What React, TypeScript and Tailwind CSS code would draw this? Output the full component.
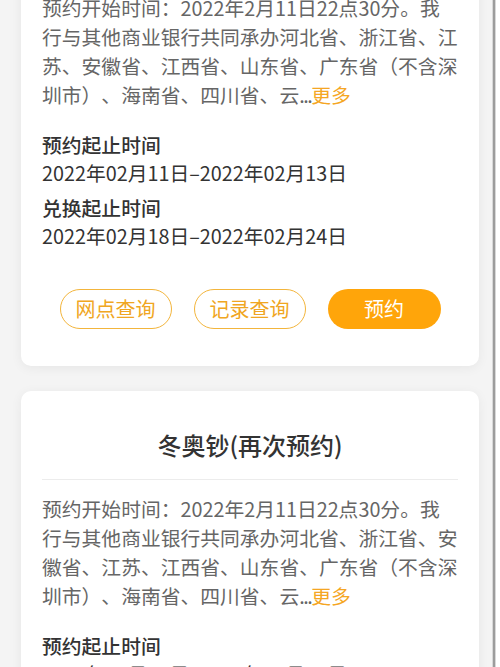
const FONT = { fontFamily: '"Noto Sans CJK SC", "Noto Sans", sans-serif' };

type Card = {
  title: string;
  intro: string;
  reserve: string;
  exchange: string;
};

const cards: Card[] = [
  {
    title: "冬奥钞",
    intro:
      "预约开始时间：2022年2月11日22点30分。我行与其他商业银行共同承办河北省、浙江省、江苏、安徽省、江西省、山东省、广东省（不含深圳市）、海南省、四川省、云",
    reserve: "2022年02月11日–2022年02月13日",
    exchange: "2022年02月18日–2022年02月24日",
  },
  {
    title: "冬奥钞(再次预约)",
    intro:
      "预约开始时间：2022年2月11日22点30分。我行与其他商业银行共同承办河北省、浙江省、安徽省、江苏、江西省、山东省、广东省（不含深圳市）、海南省、四川省、云",
    reserve: "2022年02月11日–2022年02月13日",
    exchange: "2022年02月18日–2022年02月24日",
  },
];

function ReserveCard({ card }: { card: Card }) {
  return (
    <div className="w-[458px] shrink-0 rounded-[10px] bg-white px-[21px] pt-[39px] pb-[37px] shadow-[0_2px_12px_rgba(0,0,0,0.06)]">
      <h3 className="text-center text-[24px] leading-[30px] font-medium text-[#333]">{card.title}</h3>
      <div className="mt-[19px] h-px bg-[#ececec]" />
      <p className="mt-[14px] text-[19.8px] leading-[29px] text-[#666] [text-spacing-trim:space-all]">
        {card.intro}
        <span className="tracking-[-1.5px]">...</span>
        <span className="text-[#f5a623]">更多</span>
      </p>

      <div className="mt-[22px] text-[19.8px] leading-[28px] text-[#333]">
        <h4 className="font-medium">预约起止时间</h4>
        <p>{card.reserve}</p>
        <h4 className="mt-[7px] font-medium">兑换起止时间</h4>
        <p>{card.exchange}</p>
      </div>

      <div className="mt-[39px] flex justify-center gap-[22px]">
        <button
          type="button"
          className="h-[40px] w-[112px] rounded-full border border-[#f3b53c] text-[20px] text-[#f0a622]"
        >
          网点查询
        </button>
        <button
          type="button"
          className="h-[40px] w-[112px] rounded-full border border-[#f3b53c] text-[20px] text-[#f0a622]"
        >
          记录查询
        </button>
        <button
          type="button"
          className="h-[40px] w-[113px] rounded-full bg-[#ffa50a] text-[20px] text-white"
        >
          预约
        </button>
      </div>
    </div>
  );
}

export default function App() {
  return (
    <div className="flex h-[667px] w-[500px] overflow-hidden bg-white" style={FONT}>
      <div className="flex-1 overflow-hidden bg-[#f4f4f4]">
        <div className="-mt-[110px] flex flex-col gap-[25px] pl-[21px]">
          {cards.map((c) => (
            <ReserveCard key={c.title} card={c} />
          ))}
        </div>
      </div>
      <div className="w-[1px] bg-[#d8d8d8]" />
      <div className="w-[2px] bg-[#9c9c9c]" />
      <div className="w-[1px] bg-[#d8d8d8]" />
      <div className="w-[4px] bg-white" />
    </div>
  );
}
